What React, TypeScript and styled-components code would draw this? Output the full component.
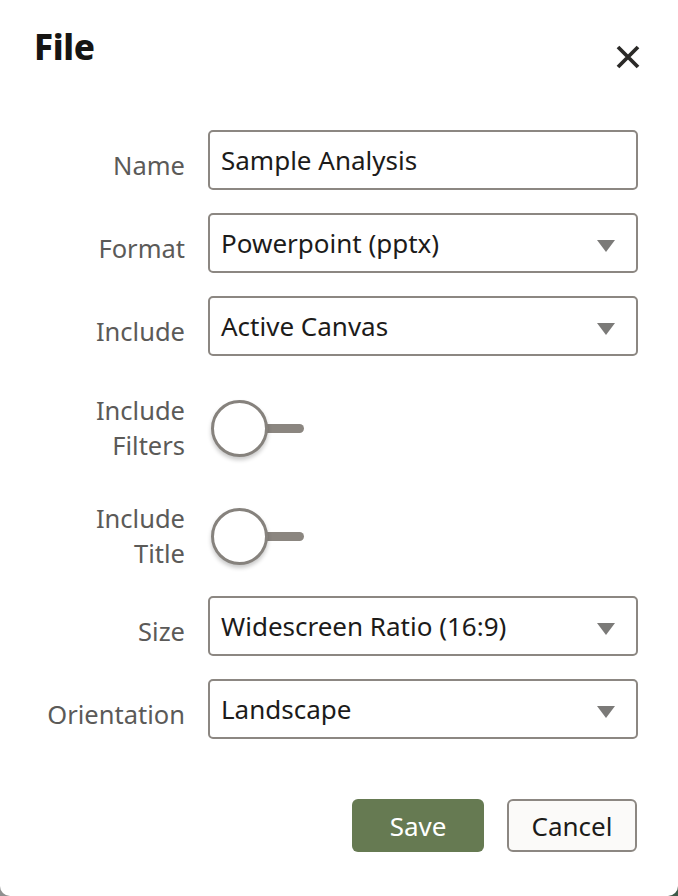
import React from "react";
import styled, { createGlobalStyle } from "styled-components";

const Global = createGlobalStyle`
  html, body { margin: 0; padding: 0; }
  body {
    background: linear-gradient(90deg, #8f8f8f 0%, #8f8f8f 50%, #3c5a48 50%, #3c5a48 100%);
    font-family: "Noto Sans", "Open Sans", sans-serif;
  }
  * { box-sizing: border-box; }
`;

const Dialog = styled.div`
  width: 678px;
  height: 896px;
  background: #ffffff;
  border-radius: 0 0 10px 10px;
  display: flex;
  flex-direction: column;
  padding: 0 41px 0 34px;
`;

const Header = styled.div`
  display: flex;
  justify-content: space-between;
  align-items: flex-start;
  height: 130px;
  padding-top: 24px;
`;

const Title = styled.h1`
  margin: 0;
  font-family: "Noto Sans", sans-serif;
  font-weight: 800;
  font-size: 35px;
  line-height: 46px;
  letter-spacing: -0.3px;
  color: #161513;
`;

const Close = styled.button`
  border: none;
  background: transparent;
  padding: 0;
  margin: 18px -6px 0 0;
  width: 30px;
  height: 30px;
  display: flex;
  align-items: center;
  justify-content: center;
  cursor: pointer;
`;

const Field = styled.div<{ $space: number }>`
  display: grid;
  grid-template-columns: 151px 430px;
  column-gap: 23px;
  align-items: center;
  margin-top: ${(p) => p.$space}px;
`;

const Label = styled.label<{ $single?: boolean }>`
  text-align: right;
  font-size: 25.5px;
  line-height: 35px;
  color: #5b5a58;
  padding-top: ${(p) => (p.$single ? "10px" : "0")};
`;

const Box = styled.div`
  position: relative;
  height: 60px;
  border: 2px solid #8c8782;
  border-radius: 5px;
  display: flex;
  align-items: center;
  padding: 0 11px;
  font-size: 26px;
  color: #1c1b1a;
  background: #fff;
`;

const Arrow = styled.span`
  position: absolute;
  right: 21px;
  top: 25px;
  width: 0;
  height: 0;
  border-left: 9.5px solid transparent;
  border-right: 9.5px solid transparent;
  border-top: 12px solid #7b7a78;
`;

const Switch = styled.div`
  position: relative;
  width: 94px;
  height: 58px;
  margin-left: 3px;
  &::before {
    content: "";
    position: absolute;
    left: 28px;
    top: 25px;
    width: 65px;
    height: 9px;
    border-radius: 5px;
    background: #8b8680;
  }
`;

const Knob = styled.span`
  position: absolute;
  left: 0;
  top: 1px;
  width: 57px;
  height: 57px;
  border-radius: 50%;
  background: #ffffff;
  border: 3px solid #86827d;
  box-shadow: 0 3px 4px rgba(0, 0, 0, 0.22);
`;

const Footer = styled.div`
  display: flex;
  justify-content: flex-end;
  gap: 23px;
  margin-top: 60px;
`;

const Btn = styled.button<{ $primary?: boolean }>`
  height: 53px;
  border-radius: 6px;
  font-family: "Noto Sans", sans-serif;
  font-size: 26px;
  padding: 0;
  cursor: pointer;
  width: ${(p) => (p.$primary ? "132px" : "130px")};
  background: ${(p) => (p.$primary ? "#667a52" : "#fbfaf9")};
  color: ${(p) => (p.$primary ? "#ffffff" : "#1c1b1a")};
  border: ${(p) => (p.$primary ? "none" : "2px solid #8c8782")};
`;

const Select = ({ value }: { value: string }) => (
  <Box>
    {value}
    <Arrow />
  </Box>
);

const Toggle = () => (
  <Switch>
    <Knob />
  </Switch>
);

export default function App() {
  return (
    <>
      <Global />
      <Dialog>
        <Header>
          <Title>File</Title>
          <Close aria-label="Close">
            <svg width="24" height="24" viewBox="0 0 24 24">
              <path d="M2 2 L22 22 M22 2 L2 22" stroke="#2a2927" strokeWidth="3.8" strokeLinecap="butt" />
            </svg>
          </Close>
        </Header>
        <Field $space={0}>
          <Label $single>Name</Label>
          <Box>Sample Analysis</Box>
        </Field>
        <Field $space={23}>
          <Label $single>Format</Label>
          <Select value="Powerpoint (pptx)" />
        </Field>
        <Field $space={23}>
          <Label $single>Include</Label>
          <Select value="Active Canvas" />
        </Field>
        <Field $space={37}>
          <Label>
            Include
            <br />
            Filters
          </Label>
          <Toggle />
        </Field>
        <Field $space={38}>
          <Label>
            Include
            <br />
            Title
          </Label>
          <Toggle />
        </Field>
        <Field $space={25}>
          <Label $single>Size</Label>
          <Select value="Widescreen Ratio (16:9)" />
        </Field>
        <Field $space={23}>
          <Label $single>Orientation</Label>
          <Select value="Landscape" />
        </Field>
        <Footer>
          <Btn $primary>Save</Btn>
          <Btn>Cancel</Btn>
        </Footer>
      </Dialog>
    </>
  );
}
